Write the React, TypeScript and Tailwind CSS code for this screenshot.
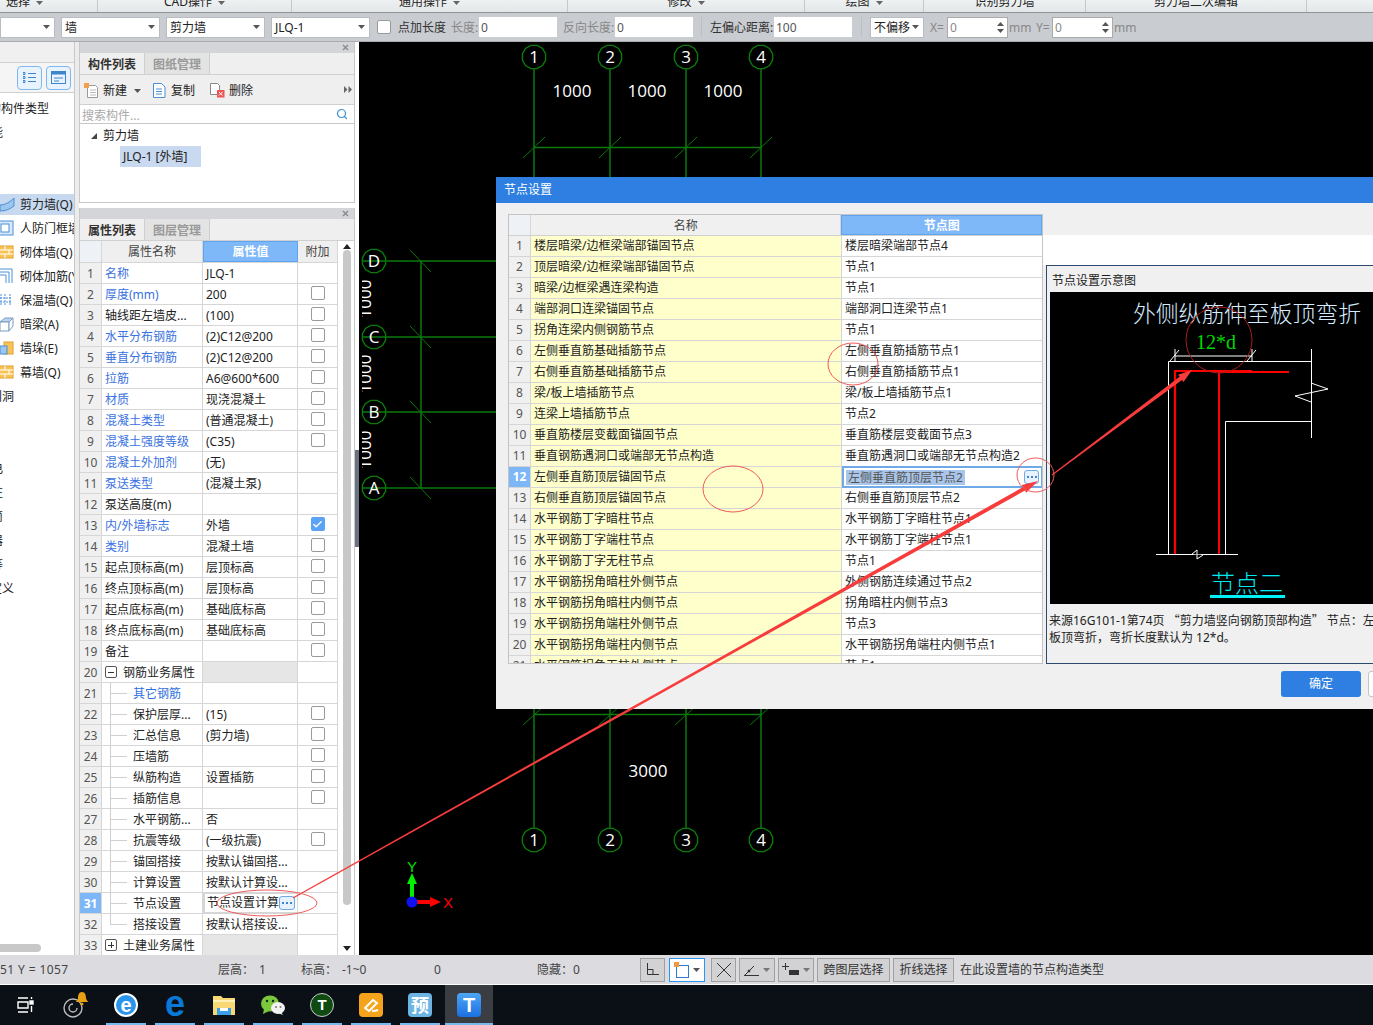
import React from "react";
import { Search, Check } from "lucide-react";

const Tri = ({ c = "#555" }: { c?: string }) => (
  <svg width="7" height="4" viewBox="0 0 7 4" className="shrink-0"><path d="M0 0h7L3.5 4z" fill={c} /></svg>
);

const Combo = ({ w, text }: { w: string; text?: string }) => (
  <div className={`${w} h-[21px] bg-white border border-[#b9bcc0] flex items-center justify-between pl-[3px] pr-[4px] text-[#222] shrink-0`}>
    <span className="leading-[19px] pt-[1px]">{text}</span>
    <Tri />
  </div>
);

const Inp = ({ v }: { v: string }) => (
  <div className="w-[78px] h-[20px] bg-white pl-[2px] text-[#555] leading-[22px] shrink-0">{v}</div>
);

const Spin = () => (
  <div className="w-[61px] h-[21px] bg-white border border-[#aaa] flex items-center justify-between pl-[2px] pr-[3px] text-[#888] shrink-0">
    <span className="leading-[19px] pt-[1px]">0</span>
    <div className="flex flex-col gap-[3px]">
      <svg width="7" height="4" className="block"><path d="M0 4h7L3.5 0z" fill="#555" /></svg>
      <svg width="7" height="4" className="block"><path d="M0 0h7L3.5 4z" fill="#555" /></svg>
    </div>
  </div>
);

const Ribbon = ({ w, text, extra, arrow = true }: { w: string; text: string; extra?: string; arrow?: boolean }) => (
  <div className={`${w} ${extra ?? ""} h-[12px] border-r border-[#c4c8cb] flex justify-center gap-[6px] shrink-0 overflow-hidden`}>
    <span className="text-[12px] leading-[16px] -mt-[6px] text-[#222] whitespace-nowrap">{text}</span>
    {arrow && <span className="mt-[1px]"><Tri c="#666" /></span>}
  </div>
);

/* ---------- sidebar ---------- */
const Brick = () => (
  <svg width="15" height="14" viewBox="0 0 15 14" className="-ml-[1px]">
    <rect x="0" y="1" width="14" height="12" fill="#f7c356" stroke="#e2a02e" />
    <path d="M0 5h14M0 9h14M6 1v4M10 5v4M6 9v4" stroke="#fff" />
  </svg>
);
const sideIcons: Record<string, React.ReactNode> = {
  a: <svg width="15" height="16" viewBox="0 0 15 16"><path d="M0 9c5 0 10-3 14-7v8c-4 3-8 5-14 5z" fill="#9cc6ee" stroke="#4a90d9" /></svg>,
  b: <svg width="15" height="16" viewBox="0 0 15 16"><rect x="-3" y="1" width="16" height="14" fill="#d9e9f8" stroke="#4a90d9" /><rect x="1" y="4" width="8" height="8" fill="#fff" stroke="#4a90d9" /></svg>,
  c: <Brick />,
  d: <svg width="15" height="16" viewBox="0 0 15 16" fill="none" stroke="#4a90d9"><path d="M0 1h12v14M0 4h9v11M0 7h6v8" /></svg>,
  e: <svg width="15" height="16" viewBox="0 0 15 16" fill="none" stroke="#4a90d9"><path d="M1 2v12M5 2v12M10 2v12M0 6h11M0 10h11" strokeDasharray="2 1" /></svg>,
  f: <svg width="15" height="16" viewBox="0 0 15 16" fill="#fff" stroke="#7b9cc0"><path d="M0 6l5-4h8l-4 4z" fill="#bcd6ef" /><path d="M0 6h9v9H0z" /><path d="M9 6l4-4v8l-4 5z" /></svg>,
  g: <svg width="15" height="16" viewBox="0 0 15 16"><rect x="4" y="2" width="9" height="12" fill="#f7c356" stroke="#e2a02e" /><rect x="0" y="6" width="7" height="8" fill="#9cc6ee" stroke="#4a90d9" /></svg>,
};
const sideRows: { t: string; ic?: string; ml?: string; sel?: boolean }[] = [
  { t: "的构件类型", ml: "-ml-[11px]" },
  { t: "能", ml: "-ml-[9px]" },
  { t: "" }, { t: "" },
  { t: "剪力墙(Q)", ic: "a", sel: true },
  { t: "人防门框墙(RF)", ic: "b" },
  { t: "砌体墙(Q)", ic: "c" },
  { t: "砌体加筋(Y)", ic: "d" },
  { t: "保温墙(Q)", ic: "e" },
  { t: "暗梁(A)", ic: "f" },
  { t: "墙垛(E)", ic: "g" },
  { t: "幕墙(Q)", ic: "c" },
  { t: "门洞", ml: "-ml-[10px]" },
  { t: "" }, { t: "" },
  { t: "电", ml: "-ml-[9px]" },
  { t: "柱", ml: "-ml-[9px]" },
  { t: "筒", ml: "-ml-[9px]" },
  { t: "器", ml: "-ml-[9px]" },
  { t: "等", ml: "-ml-[9px]" },
  { t: "定义", ml: "-ml-[10px]" },
];

const Sidebar = () => (
  <div className="w-[75px] shrink-0 border-r border-[#c8c8c8] flex flex-col bg-white overflow-hidden">
    <div className="h-[21px] shrink-0 bg-[#f0f0f0] border-b border-[#d0d0d0]" />
    <div className="h-[30px] shrink-0 bg-[#f5f5f5] border-b border-[#d0d0d0] flex items-center pl-[17px] gap-[4px]">
      <div className="w-[25px] h-[24px] rounded-[4px] border border-[#7fb8f0] bg-[#e8f3fd] flex items-center justify-center">
        <svg width="13" height="13" viewBox="0 0 13 13" fill="none" stroke="#3e86cc"><path d="M0 1.5h2v2H0zM0 5.5h2v2H0zM0 9.5h2v2H0zM5 2.5h8M5 6.5h8M5 10.5h8" /></svg>
      </div>
      <div className="w-[25px] h-[24px] rounded-[4px] border border-[#7fb8f0] bg-[#e8f3fd] flex items-center justify-center">
        <svg width="15" height="13" viewBox="0 0 15 13" fill="none"><rect x=".5" y=".5" width="14" height="12" stroke="#3e86cc" /><rect x=".5" y=".5" width="14" height="3" fill="#3e86cc" /><path d="M3 7h9M3 10h5" stroke="#3e86cc" /></svg>
      </div>
    </div>
    <div className="relative flex-1 min-h-0 pt-[3px] text-[#222]">
      {sideRows.map((r, i) => (
        <div key={i} className="h-[24px] flex items-center">
          <div className={`h-[21px] w-full flex items-center whitespace-nowrap leading-[21px] ${r.sel ? "bg-[#c6d9ef]" : ""}`}>
            {r.ic ? (
              <>
                <span className="w-[20px] shrink-0 flex">{sideIcons[r.ic]}</span>
                <span>{r.t}</span>
              </>
            ) : (
              <span className={r.ml}>{r.t}</span>
            )}
          </div>
        </div>
      ))}
      <div className="absolute left-0 bottom-[3px] w-[41px] h-[8px] rounded-r-[4px] bg-[#c8c8c8]" />
    </div>
  </div>
);

/* ---------- panels ---------- */
const PanelHead = ({ a, b }: { a: string; b: string }) => (
  <>
    <div className="h-[11px] bg-[#d3d5d9] flex items-center justify-end pr-[5px] shrink-0">
      <svg width="7" height="7" viewBox="0 0 7 7" stroke="#8a8a8a" strokeWidth="1.4"><path d="M1 1l5 5M6 1l-5 5" /></svg>
    </div>
    <div className="h-[22px] bg-[#efefef] border-b border-[#d0d0d0] flex shrink-0">
      <div className="w-[65px] border-r border-[#cfcfcf] flex items-center justify-center pt-[2px] font-bold text-[#333] leading-[19px]">{a}</div>
      <div className="w-[65px] bg-[#e3e3e3] border-r border-[#cfcfcf] flex items-center justify-center pt-[2px] font-bold text-[#999] leading-[19px]">{b}</div>
    </div>
  </>
);

type P = { n: string; v?: string; link?: boolean; c?: boolean; on?: boolean; tree?: boolean; group?: "-" | "+" };
const props: P[] = [
  { n: "名称", v: "JLQ-1", link: true },
  { n: "厚度(mm)", v: "200", link: true, c: true },
  { n: "轴线距左墙皮...", v: "(100)", c: true },
  { n: "水平分布钢筋", v: "(2)C12@200", link: true, c: true },
  { n: "垂直分布钢筋", v: "(2)C12@200", link: true, c: true },
  { n: "拉筋", v: "A6@600*600", link: true, c: true },
  { n: "材质", v: "现浇混凝土", link: true, c: true },
  { n: "混凝土类型", v: "(普通混凝土)", link: true, c: true },
  { n: "混凝土强度等级", v: "(C35)", link: true, c: true },
  { n: "混凝土外加剂", v: "(无)", link: true },
  { n: "泵送类型", v: "(混凝土泵)", link: true },
  { n: "泵送高度(m)" },
  { n: "内/外墙标志", v: "外墙", link: true, c: true, on: true },
  { n: "类别", v: "混凝土墙", link: true, c: true },
  { n: "起点顶标高(m)", v: "层顶标高", c: true },
  { n: "终点顶标高(m)", v: "层顶标高", c: true },
  { n: "起点底标高(m)", v: "基础底标高", c: true },
  { n: "终点底标高(m)", v: "基础底标高", c: true },
  { n: "备注", c: true },
  { n: "钢筋业务属性", group: "-" },
  { n: "其它钢筋", link: true, tree: true },
  { n: "保护层厚...", v: "(15)", c: true, tree: true },
  { n: "汇总信息", v: "(剪力墙)", c: true, tree: true },
  { n: "压墙筋", c: true, tree: true },
  { n: "纵筋构造", v: "设置插筋", c: true, tree: true },
  { n: "插筋信息", c: true, tree: true },
  { n: "水平钢筋...", v: "否", tree: true },
  { n: "抗震等级", v: "(一级抗震)", c: true, tree: true },
  { n: "锚固搭接", v: "按默认锚固搭...", tree: true },
  { n: "计算设置", v: "按默认计算设...", tree: true },
  { n: "节点设置", v: "节点设置计算", tree: true },
  { n: "搭接设置", v: "按默认搭接设...", tree: true },
  { n: "土建业务属性", group: "+" },
];

const Dots = ({ w = "w-[16px]" }: { w?: string }) => (
  <div className={`${w} h-[14px] rounded-[3px] border border-[#6fa9e8] bg-[#e8f2fc] flex items-center justify-center gap-[2px] shrink-0`}>
    <i className="w-[2px] h-[2px] bg-[#3e86cc]" /><i className="w-[2px] h-[2px] bg-[#3e86cc]" /><i className="w-[2px] h-[2px] bg-[#3e86cc]" />
  </div>
);

const PropRow = ({ p, i }: { p: P; i: number }) => {
  const sel = i === 30;
  return (
    <div className="h-[21px] flex border-b border-[#d6d6d6] leading-[22px] shrink-0">
      <div className={`w-[22px] shrink-0 border-r border-[#d6d6d6] text-center ${sel ? "bg-[#7db7f7] text-white font-bold" : "bg-[#f0f0f0] text-[#555]"}`}>{i + 1}</div>
      <div className="w-[101px] shrink-0 border-r border-[#d6d6d6] relative whitespace-nowrap">
        {p.group ? (
          <div className="flex items-center pl-[3px] gap-[6px] h-full text-[#222]">
            <span className="w-[12px] h-[12px] border border-[#555] rounded-[2px] flex items-center justify-center relative shrink-0">
              <i className="w-[6px] h-[1px] bg-[#333]" />
              {p.group === "+" && <i className="absolute w-[1px] h-[6px] bg-[#333]" />}
            </span>
            <span className="pt-[1px]">{p.n}</span>
          </div>
        ) : p.tree ? (
          <div className={`h-full pl-[31px] ${p.link ? "text-[#2f6fe0]" : "text-[#222]"}`}>
            <i className={`absolute left-[8px] top-0 w-[1px] bg-[#d0d0d0] ${i === 31 ? "h-[11px]" : "h-[21px]"}`} />
            <i className="absolute left-[8px] top-[10px] w-[17px] h-[1px] bg-[#d0d0d0]" />
            {p.n}
          </div>
        ) : (
          <div className={`pl-[3px] ${p.link ? "text-[#3a72e0]" : "text-[#222]"}`}>{p.n}</div>
        )}
      </div>
      <div className={`w-[95px] shrink-0 border-r border-[#d6d6d6] whitespace-nowrap text-[#222] ${p.group ? "bg-[#e6e6e6]" : ""} ${sel ? "border-2 border-[#6fa9e8] flex items-center justify-between pl-[2px] pr-[2px] -mt-[1px] h-[22px]" : "pl-[3px]"}`}>
        {sel ? (<><span className="leading-[18px]">{p.v}</span><Dots /></>) : p.v}
      </div>
      <div className="w-[40px] shrink-0 border-r border-[#d6d6d6] flex items-center justify-center">
        {p.c && (p.on ? (
          <span className="w-[14px] h-[14px] rounded-[2px] bg-[#5ba4f5] flex items-center justify-center -mt-[2px]"><Check size={11} color="#fff" strokeWidth={3} /></span>
        ) : (
          <span className="w-[14px] h-[14px] rounded-[2px] border border-[#9a9a9a] bg-white -mt-[2px]" />
        ))}
      </div>
    </div>
  );
};

const Panels = () => (
  <div className="w-[276px] shrink-0 flex flex-col gap-[5px] text-[#222]">
    <div className="h-[161px] border-x border-b border-[#c8c8c8] bg-white flex flex-col shrink-0">
      <PanelHead a="构件列表" b="图纸管理" />
      <div className="h-[30px] bg-[#efefef] border-b border-[#d0d0d0] flex items-center pl-[4px] pt-[2px] shrink-0 relative">
        <svg width="16" height="16" viewBox="0 0 16 16" className="mr-[3px]"><path d="M3.5 2.5h8l2 2v10h-10z" fill="#fff" stroke="#999" /><path d="M6 7h6M6 9.5h6M6 12h6" stroke="#bbb" /><rect x="0" y="0" width="5" height="5" fill="#f5a04a" /></svg>
        <span className="w-[24px] leading-[20px]">新建</span>
        <span className="ml-[7px] mr-[12px]"><Tri /></span>
        <svg width="13" height="15" viewBox="0 0 13 15" className="mr-[5px]" fill="none" stroke="#4a8fd4"><path d="M.5.5h8l3.5 3.5v10.500H.5z" fill="#fff" /><path d="M3 6h6M3 8.500h6M3 11h6" /></svg>
        <span className="w-[24px] leading-[20px]">复制</span>
        <svg width="15" height="15" viewBox="0 0 15 15" className="ml-[15px] mr-[4px]"><path d="M.5.5h7l2 2v9h-9z" fill="#fff" stroke="#888" /><rect x="7" y="7" width="7.500" height="7.500" fill="#e55" /><path d="M9 9l3.500 3.500M12.500 9L9 12.500" stroke="#fff" /></svg>
        <span className="leading-[20px]">删除</span>
        <svg width="8" height="7" viewBox="0 0 8 7" className="absolute right-[2px] top-[11px]" fill="#666"><path d="M0 0l3.500 3.500L0 7zM4.500 0L8 3.500 4.500 7z" /></svg>
      </div>
      <div className="h-[19px] border-b border-[#c8c8c8] flex items-center justify-between pl-[2px] pr-[6px] shrink-0 text-[#aaa]">
        <span className="leading-[18px] pt-[3px]">搜索构件...</span>
        <Search size={12} color="#3b8fd0" strokeWidth={2.4} />
      </div>
      <div className="flex-1 pt-[1px]">
        <div className="h-[21px] flex items-center pl-[11px] gap-[6px] leading-[21px]">
          <svg width="6" height="6"><path d="M6 0v6H0z" fill="#444" /></svg>
          <span>剪力墙</span>
        </div>
        <div className="ml-[40px] w-[81px] h-[21px] bg-[#c8d9f0] pl-[3px] leading-[21px] whitespace-nowrap">JLQ-1 [外墙]</div>
      </div>
    </div>
    <div className="flex-1 min-h-0 border-x border-[#c8c8c8] bg-white flex flex-col overflow-hidden">
      <PanelHead a="属性列表" b="图层管理" />
      <div className="flex flex-1 min-h-0">
        <div className="w-[258px] shrink-0 flex flex-col">
          <div className="h-[22px] flex border-b border-[#d6d6d6] shrink-0 leading-[22px] bg-[#efefef] text-[#444]">
            <div className="w-[22px] bg-[#eef2f7] border-r border-[#d6d6d6]" />
            <div className="w-[101px] border-r border-[#d6d6d6] text-center">属性名称</div>
            <div className="w-[95px] bg-[#7fb8f8] text-white text-center font-bold border border-[#5ea4f0] leading-[20px]">属性值</div>
            <div className="w-[40px] border-r border-[#d6d6d6] text-center">附加</div>
          </div>
          {props.map((p, i) => <PropRow key={i} p={p} i={i} />)}
        </div>
        <div className="flex-1 flex flex-col items-center pt-[3px] pb-[4px] pl-[2px]">
          <svg width="8" height="5" className="shrink-0"><path d="M0 5h8L4 0z" fill="#222" /></svg>
          <div className="w-[8px] h-[655px] shrink-0 rounded-[4px] bg-[#c8c8c8] mt-[1px]" />
          <div className="flex-1" />
          <svg width="8" height="5" className="shrink-0"><path d="M0 0h8L4 5z" fill="#222" /></svg>
        </div>
      </div>
    </div>
  </div>
);

/* ---------- dialog ---------- */
const nodes = [
  ["楼层暗梁/边框梁端部锚固节点", "楼层暗梁端部节点4"],
  ["顶层暗梁/边框梁端部锚固节点", "节点1"],
  ["暗梁/边框梁遇连梁构造", "节点1"],
  ["端部洞口连梁锚固节点", "端部洞口连梁节点1"],
  ["拐角连梁内侧钢筋节点", "节点1"],
  ["左侧垂直筋基础插筋节点", "左侧垂直筋插筋节点1"],
  ["右侧垂直筋基础插筋节点", "右侧垂直筋插筋节点1"],
  ["梁/板上墙插筋节点", "梁/板上墙插筋节点1"],
  ["连梁上墙插筋节点", "节点2"],
  ["垂直筋楼层变截面锚固节点", "垂直筋楼层变截面节点3"],
  ["垂直钢筋遇洞口或端部无节点构造", "垂直筋遇洞口或端部无节点构造2"],
  ["左侧垂直筋顶层锚固节点", "左侧垂直筋顶层节点2"],
  ["右侧垂直筋顶层锚固节点", "右侧垂直筋顶层节点2"],
  ["水平钢筋丁字暗柱节点", "水平钢筋丁字暗柱节点1"],
  ["水平钢筋丁字端柱节点", "水平钢筋丁字端柱节点1"],
  ["水平钢筋丁字无柱节点", "节点1"],
  ["水平钢筋拐角暗柱外侧节点", "外侧钢筋连续通过节点2"],
  ["水平钢筋拐角暗柱内侧节点", "拐角暗柱内侧节点3"],
  ["水平钢筋拐角端柱外侧节点", "节点3"],
  ["水平钢筋拐角端柱内侧节点", "水平钢筋拐角端柱内侧节点1"],
  ["水平钢筋拐角无柱外侧节点", "节点1"],
];

const Schematic = () => (
  <svg width="323" height="312" viewBox="1050 292 323 312" className="block shrink-0 bg-black" fill="none">
    <text x="1133" y="322" fill="#d6ecff" fontSize="22.800" fontWeight="300" style={{ fontFamily: '"Noto Sans CJK SC", sans-serif' }}>外侧纵筋伸至板顶弯折</text>
    <text x="1196" y="349" fill="#00d800" fontSize="20" style={{ fontFamily: '"Liberation Serif", serif' }}>12*d</text>
    <g stroke="#fff" strokeWidth="1">
      <path d="M1175 356h77M1175 349v12M1252 349v12M1170 361l9-11M1247 361l9-11" />
      <path d="M1168.500 554V361.500H1311.500M1156 554.500H1238M1225.500 554V421.500H1311.500M1311.500 349V438" />
      <path d="M1311 383l17 6-33 7 16 6" />
    </g>
    <path d="M1192 554L1197 550V559L1203 555" stroke="#fff" fill="#000" />
    <path d="M1175 554V371h77" stroke="#f00" strokeWidth="2.200" />
    <path d="M1219 554V372h70" stroke="#f00" strokeWidth="2" />
    <text x="1211" y="592" fill="#00e8f0" fontSize="24" fontWeight="300" style={{ fontFamily: '"Noto Sans CJK SC", sans-serif' }}>节点二</text>
    <rect x="1210" y="595" width="75" height="3" fill="#00f0f8" />
    <circle cx="1219" cy="340" r="33" stroke="#a81c1c" />
  </svg>
);

const CQ = ({ t }: { t: string }) => <span className="[font-family:'Noto_Sans_CJK_SC',sans-serif]">{t}</span>;

const Dialog = () => (
  <div className="absolute left-[137px] top-[135px] w-[900px] h-[532px] bg-[#f0f0f0] flex flex-col text-[#222]">
    <div className="h-[26px] bg-[#2e7fe1] text-white pl-[8px] leading-[26px] shrink-0">节点设置</div>
    <div className="flex pt-[11px] pl-[12px] h-[461px] shrink-0">
      <div className="w-[535px] h-[450px] shrink-0 border border-[#c4c4c4] overflow-hidden flex flex-col bg-white">
        <div className="h-[21px] flex shrink-0 leading-[22px] bg-[#f0f0f0] border-b border-[#d0d0d0] text-[#444]">
          <div className="w-[22px] bg-[#eef2f7] border-r border-[#d6d6d6]" />
          <div className="w-[311px] border-r border-[#d6d6d6] text-center">名称</div>
          <div className="w-[201px] bg-[#7fb8f8] border border-[#5ea4f0] text-white text-center font-bold leading-[20px]">节点图</div>
        </div>
        {nodes.map((r, i) => {
          const sel = i === 11;
          return (
            <div key={i} className="h-[21px] flex shrink-0 border-b border-[#d6d6d6] leading-[20px] whitespace-nowrap">
              <div className={`w-[22px] border-r border-[#d6d6d6] text-center shrink-0 ${sel ? "bg-[#7db7f7] text-white font-bold" : "bg-[#f0f0f0] text-[#555]"}`}>{i + 1}</div>
              <div className="w-[311px] bg-[#ffffcc] border-r border-[#d6d6d6] pl-[3px] shrink-0">{r[0]}</div>
              {sel ? (
                <div className="w-[201px] border-2 border-[#6fa9e8] -mt-[1px] h-[22px] flex items-center justify-between pl-[2px] pr-[2px] shrink-0">
                  <span className="bg-[#a9c5e9] text-[#555] leading-[15px] px-[2px]">{r[1]}</span>
                  <Dots w="w-[15px]" />
                </div>
              ) : (
                <div className="w-[201px] border-r border-[#d6d6d6] pl-[3px] shrink-0">{r[1]}</div>
              )}
            </div>
          );
        })}
      </div>
      <div className="flex-1 flex flex-col">
        <div className="h-[21px] bg-[#f0f0f0] shrink-0" />
        <div className="h-[30px] bg-white shrink-0" />
        <div className="flex-1 ml-[3px] border-l border-y border-[#2a4a70] bg-[#f0f0f0] pl-[3px]">
          <div className="h-[26px] pl-[2px] leading-[30px]">节点设置示意图</div>
          <Schematic />
          <div className="pt-[7px] -ml-[1px] leading-[17px] whitespace-nowrap">
            <div>来源16G101-1第74页 <CQ t="“" />剪力墙竖向钢筋顶部构造<CQ t="”" /> 节点：左侧纵筋伸至</div>
            <div>板顶弯折，弯折长度默认为 12*d。</div>
          </div>
        </div>
      </div>
    </div>
    <div className="flex pl-[785px] pt-[7px] gap-[7px]">
      <div className="w-[80px] h-[26px] shrink-0 rounded-[3px] bg-[#2e7fe1] text-white text-center leading-[26px]">确定</div>
      <div className="w-[60px] h-[26px] shrink-0 rounded-[3px] bg-white border border-[#c4c4c4]" />
    </div>
  </div>
);

/* ---------- canvas ---------- */
const gon = (cx: number, cy: number, r: number) =>
  Array.from({ length: 12 }, (_, i) => {
    const a = (Math.PI / 6) * i + Math.PI / 12;
    return `${(cx + r * Math.cos(a)).toFixed(1)},${(cy + r * Math.sin(a)).toFixed(1)}`;
  }).join(" ");

const G = "#0b7a0b";
const Bubble = ({ x, y, t }: { x: number; y: number; t: string }) => (
  <>
    <polygon points={gon(x, y, 12)} fill="none" stroke={G} strokeWidth="1.400" />
    <text x={x} y={y + 6} fill="#fff" fontSize="17" textAnchor="middle" style={{ fontFamily: '"Open Sans", sans-serif' }}>{t}</text>
  </>
);
const Dim = ({ x, y, r }: { x: number; y: number; r?: boolean }) => (
  <text x={x} y={y} fill="#fff" fontSize="17" textAnchor="middle" transform={r ? `rotate(-90 ${x} ${y})` : undefined} style={{ fontFamily: '"Open Sans", sans-serif' }}>1000</text>
);

const xs = [534, 610, 686, 761];
const ys = [261, 337, 412, 488];

const Canvas = () => (
  <div className="flex-1 relative bg-black overflow-hidden">
    <svg className="block w-[1014px] h-[913px]" viewBox="359 42 1014 913" fill="none">
      <defs>
        <clipPath id="dimClip"><rect x="362" y="260" width="20" height="220" /></clipPath>
      </defs>
      <g stroke={G} strokeWidth="1.500">
        {xs.map((x) => (
          <g key={x}>
            <path d={`M${x} 69V828`} />
            <path d={`M${x - 11} 158L${x + 11} 137`} strokeWidth="1" />
            <path d={`M${x - 11} 725L${x + 11} 705`} strokeWidth="1" />
          </g>
        ))}
        <path d="M534 147.500H761M534 714.500H761M421 261V488" />
        {ys.map((y) => (
          <g key={y}>
            <path d={`M362 ${y}H520`} />
            <path d={`M410 ${y - 11}L431 ${y + 11}`} strokeWidth="1" />
          </g>
        ))}
      </g>
      {xs.map((x, i) => <Bubble key={x} x={x} y={57} t={String(i + 1)} />)}
      {xs.map((x, i) => <Bubble key={x} x={x} y={840} t={String(i + 1)} />)}
      {["D", "C", "B", "A"].map((t, i) => <Bubble key={t} x={374} y={ys[i]} t={t} />)}
      <Dim x={572} y={97} /><Dim x={647} y={97} /><Dim x={723} y={97} />
      <g clipPath="url(#dimClip)">
        <Dim x={371} y={299} r /><Dim x={371} y={374} r /><Dim x={371} y={450} r />
      </g>
      <text x={648} y={777} fill="#fff" fontSize="17" textAnchor="middle" style={{ fontFamily: '"Open Sans", sans-serif' }}>3000</text>
      <path d="M412 898V882" stroke="#00f000" strokeWidth="4" />
      <path d="M412 873l5 11h-10z" fill="#00f000" />
      <text x={412} y={872} fill="#00e000" fontSize="15" textAnchor="middle" style={{ fontFamily: '"Liberation Sans", sans-serif' }}>Y</text>
      <path d="M416 902H431" stroke="#f00" strokeWidth="4" />
      <path d="M441 902l-11-5v10z" fill="#f00" />
      <circle cx="412" cy="902" r="5.500" fill="#1010f0" />
      <text x={448} y={908} fill="#f00" fontSize="15" textAnchor="middle" style={{ fontFamily: '"Liberation Sans", sans-serif' }}>X</text>
    </svg>
    <Dialog />
  </div>
);

/* ---------- status + taskbar ---------- */
const SBtn = ({ w, ml, children, sel }: { w: string; ml: string; children: React.ReactNode; sel?: boolean }) => (
  <div className={`${w} ${ml} h-[24px] shrink-0 flex items-center justify-center gap-[4px] border ${sel ? "border-[#2b95f5] bg-white" : "border-[#a0a0a0] bg-[#d2d2d5]"} text-[#333]`}>{children}</div>
);

const Status = () => (
  <div className="h-[30px] bg-[#dcdce0] border-b border-white flex items-center shrink-0 text-[#444] leading-[20px] whitespace-nowrap">
    <span className="w-[218px] shrink-0 pt-[1px] tracking-[0.4px]">51 Y = 1057</span>
    <span className="w-[41px] shrink-0 pt-[1px]">层高：</span>
    <span className="w-[42px] shrink-0 pt-[1px]">1</span>
    <span className="w-[41px] shrink-0 pt-[1px]">标高：</span>
    <span className="w-[92px] shrink-0 pt-[1px]">-1~0</span>
    <span className="w-[103px] shrink-0 pt-[1px]">0</span>
    <span className="w-[103px] shrink-0 pt-[1px]">隐藏：0</span>
    <SBtn w="w-[25px]" ml="ml-0">
      <svg width="13" height="13" fill="none" stroke="#333"><path d="M1.500 0v11.500H13M1.500 6.500H7v5" /></svg>
    </SBtn>
    <SBtn w="w-[36px]" ml="ml-[4px]" sel>
      <svg width="15" height="16" viewBox="0 0 15 16" fill="none"><rect x="2.500" y="3.500" width="12" height="12" stroke="#2b7bd5" /><rect x="0" y="0" width="5" height="5" fill="#f59a3c" /></svg>
      <Tri />
    </SBtn>
    <SBtn w="w-[25px]" ml="ml-[6px]">
      <svg width="16" height="16" stroke="#333" fill="none"><path d="M1 1l14 14M15 1L1 15" /></svg>
    </SBtn>
    <SBtn w="w-[36px]" ml="ml-[3px]">
      <svg width="15" height="13" stroke="#333" fill="none"><path d="M0 12.500h15M1 12L10 3" /><circle cx="5" cy="8" r="1" fill="#333" /></svg>
      <Tri c="#777" />
    </SBtn>
    <SBtn w="w-[36px]" ml="ml-[3px]">
      <svg width="17" height="13" fill="none"><path d="M0 3.500h7M3.500 0v7" stroke="#333" /><rect x="7" y="7" width="10" height="5" fill="#333" /></svg>
      <Tri c="#777" />
    </SBtn>
    <SBtn w="w-[73px]" ml="ml-[3px]">跨图层选择</SBtn>
    <SBtn w="w-[61px]" ml="ml-[3px]">折线选择</SBtn>
    <span className="ml-[6px] text-[#333] pt-[1px]">在此设置墙的节点构造类型</span>
  </div>
);

const TB = ({ children, active }: { children: React.ReactNode; active?: boolean }) => (
  <div className={`h-[40px] shrink-0 relative flex items-center justify-center ${active ? "w-[48px] bg-[#3a3d42] ml-[5px]" : "w-[40px] ml-[9px]"}`}>
    {children}
    <i className="absolute left-0 right-0 bottom-0 h-[2px] bg-[#76b9ed]" />
  </div>
);

const Taskbar = () => (
  <div className="h-[40px] shrink-0 bg-[#0b1016] flex items-start">
    <div className="w-[97px] h-[40px] shrink-0 relative">
      <svg width="18" height="16" viewBox="0 0 18 16" className="absolute left-[17px] top-[12px]" fill="none" stroke="#fff" strokeWidth="1.400">
        <path d="M1 1h10M1 15h10M1 5h10v6H1z" /><rect x="13" y="4" width="3" height="3" fill="#fff" /><path d="M14.500 9v6M14.500 0v2" />
      </svg>
      <svg width="30" height="30" viewBox="0 0 30 30" className="absolute left-[62px] top-[4px]" fill="none">
        <circle cx="11" cy="19" r="9" stroke="#bbb" strokeWidth="1.400" /><path d="M15 19a4 4 0 1 1-4-4" stroke="#bbb" strokeWidth="1.400" />
        <path d="M20 3c3 0 4 3 4 6 0 2 2 3 2 4h-12c0-1 2-2 2-4 0-3 1-6 4-6z" fill="#e8a013" /><circle cx="20" cy="15" r="1.500" fill="#e8a013" />
      </svg>
    </div>
    <TB>
      <div className="w-[24px] h-[24px] rounded-full bg-[#2a94ea] border-2 border-white flex items-center justify-center text-white text-[20px] font-bold leading-[18px] [font-family:'Liberation_Sans',sans-serif]">e</div>
    </TB>
    <TB>
      <span className="text-[#0a78d7] text-[36px] font-bold leading-[30px] -mt-[2px] [font-family:'Liberation_Sans',sans-serif]">e</span>
    </TB>
    <TB>
      <svg width="22" height="20" viewBox="0 0 22 20"><path d="M0 1h8l2 2h12v17H0z" fill="#f8d875" /><path d="M0 5h22v2H0z" fill="#fff0b8" /><path d="M4 13h14v7H4z" fill="#3aa0e8" /><path d="M7 13h8v3H7z" fill="#fff" /></svg>
    </TB>
    <TB>
      <svg width="24" height="21" viewBox="0 0 24 21"><ellipse cx="9" cy="8.500" rx="9" ry="8" fill="#7cc83c" /><path d="M3 14l-1 5 6-3z" fill="#7cc83c" /><circle cx="6" cy="6" r="1.200" fill="#123" /><circle cx="12" cy="6" r="1.200" fill="#123" /><ellipse cx="17" cy="13" rx="7" ry="6" fill="#f2f2f2" /><path d="M20 17l2 3-5-2z" fill="#f2f2f2" /><circle cx="15" cy="12" r="1" fill="#777" /><circle cx="19.500" cy="12" r="1" fill="#777" /></svg>
    </TB>
    <TB>
      <div className="w-[24px] h-[24px] rounded-full bg-[#0e4a12] border border-[#ccc] flex items-center justify-center text-white text-[15px] font-bold leading-[20px] [font-family:'Liberation_Sans',sans-serif]">T</div>
    </TB>
    <TB>
      <div className="w-[24px] h-[24px] rounded-[4px] bg-[#f5a31a] flex items-center justify-center">
        <svg width="17" height="15" viewBox="0 0 17 15" fill="none" stroke="#fff" strokeWidth="2"><path d="M2 10l8-8 4 3-8 8zM9 13c2 0 4 0 6-1" /></svg>
      </div>
    </TB>
    <TB>
      <div className="w-[24px] h-[24px] rounded-[4px] bg-[#6cb4e4] flex items-center justify-center text-white text-[18px] font-bold leading-[24px]">预</div>
    </TB>
    <TB active>
      <div className="w-[24px] h-[24px] rounded-[4px] bg-gradient-to-b from-[#4ea6f5] to-[#1c6fe0] flex items-center justify-center text-white text-[20px] font-bold leading-[24px] [font-family:'Liberation_Sans',sans-serif]">T</div>
    </TB>
  </div>
);

/* ---------- annotations ---------- */
const arrow = (x1: number, y1: number, x2: number, y2: number, w1: number, w2: number, hl: number, hw: number) => {
  const L = Math.hypot(x2 - x1, y2 - y1);
  const ux = (x2 - x1) / L, uy = (y2 - y1) / L, nx = -uy, ny = ux;
  const bx = x2 - ux * hl, by = y2 - uy * hl;
  const p = (x: number, y: number, k: number) => `${(x + nx * k).toFixed(1)},${(y + ny * k).toFixed(1)}`;
  return [p(x1, y1, w1 / 2), p(bx, by, w2 / 2), p(bx, by, hw / 2), p(x2, y2, 0), p(bx, by, -hw / 2), p(bx, by, -w2 / 2), p(x1, y1, -w1 / 2)].join(" ");
};

const Overlay = () => (
  <svg className="absolute inset-0 pointer-events-none" width="1373" height="1025" viewBox="0 0 1373 1025" fill="none">
    <polygon points={arrow(293, 898, 1038, 481, 1.200, 4, 16, 9)} fill="#f83c3c" />
    <polygon points={arrow(1052, 475, 1192, 370, 1, 4, 14, 9)} fill="#f83c3c" />
    <g stroke="#ee5a5a" strokeWidth="1">
      <ellipse cx="267" cy="903" rx="50" ry="13" />
      <ellipse cx="853" cy="364" rx="25" ry="21" />
      <ellipse cx="733" cy="489" rx="30" ry="23" />
      <ellipse cx="1035.500" cy="475" rx="18.500" ry="17" />
    </g>
  </svg>
);

export default function App() {
  return (
    <div className="relative w-[1373px] h-[1025px] overflow-hidden flex flex-col text-[12px] [font-family:'Noto_Sans','Noto_Sans_CJK_SC',sans-serif]">
      <div className="h-[13px] shrink-0 flex bg-gradient-to-b from-[#eef1f2] to-[#e4e7e9] border-b border-[#8f9295] overflow-hidden">
        <Ribbon w="w-[98px]" extra="pr-[48px]" text="选择" />
        <Ribbon w="w-[194px]" text="CAD操作" />
        <Ribbon w="w-[276px]" text="通用操作" />
        <Ribbon w="w-[237px]" text="修改" />
        <Ribbon w="w-[119px]" text="绘图" />
        <Ribbon w="w-[162px]" text="识别剪力墙" arrow={false} />
        <Ribbon w="w-[221px]" text="剪力墙二次编辑" arrow={false} />
      </div>
      <div className="h-[29px] shrink-0 bg-[#c9ccd1] border-b border-[#a9abaf] flex items-center whitespace-nowrap text-[#888] leading-[22px]">
        <Combo w="w-[55px]" />
        <Combo w="w-[99px] ml-[6px]" text="墙" />
        <Combo w="w-[99px] ml-[6px]" text="剪力墙" />
        <Combo w="w-[99px] ml-[6px]" text="JLQ-1" />
        <span className="ml-[7px] w-[14px] h-[14px] rounded-[2px] bg-white border border-[#999] shrink-0" />
        <span className="ml-[7px] w-[48px] text-[#333] shrink-0 pt-[1px]">点加长度</span>
        <span className="ml-[5px] w-[28px] shrink-0 pt-[1px]">长度:</span>
        <Inp v="0" />
        <span className="ml-[6px] w-[52px] shrink-0 pt-[1px]">反向长度:</span>
        <Inp v="0" />
        <i className="ml-[8px] w-[1px] h-[20px] bg-[#bbbec2] shrink-0" />
        <span className="ml-[8px] w-[64px] text-[#333] shrink-0 pt-[1px]">左偏心距离:</span>
        <Inp v="100" />
        <i className="ml-[9px] w-[1px] h-[20px] bg-[#bbbec2] shrink-0" />
        <Combo w="w-[54px] ml-[8px]" text="不偏移" />
        <span className="ml-[6px] w-[17px] shrink-0 pt-[1px]">X=</span>
        <Spin />
        <span className="w-[28px] pl-[1px] shrink-0 pt-[1px]">mm</span>
        <span className="w-[16px] shrink-0 pt-[1px]">Y=</span>
        <Spin />
        <span className="pl-[1px] pt-[1px]">mm</span>
      </div>
      <div className="h-[913px] shrink-0 flex bg-white">
        <Sidebar />
        <div className="w-[4px] shrink-0 bg-[#ececec]" />
        <Panels />
        <div className="w-[4px] shrink-0 bg-white relative">
          <div className="absolute left-0 top-[408px] w-[4px] h-[97px] bg-[#6b7280]" />
        </div>
        <Canvas />
      </div>
      <Status />
      <Taskbar />
      <Overlay />
    </div>
  );
}
